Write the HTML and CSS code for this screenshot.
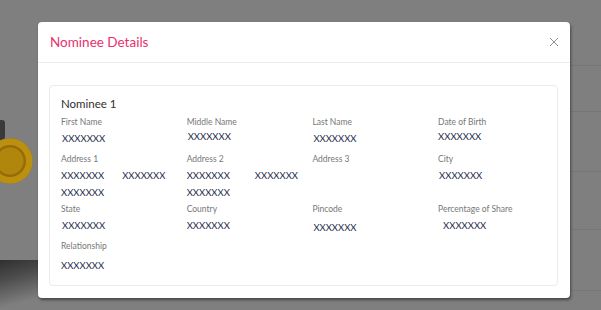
FILE: index.html
```html
<!DOCTYPE html>
<html lang="en">
<head>
    <meta charset="UTF-8">
    <meta name="viewport" content="width=device-width, initial-scale=1.0">
    <title>Nominee Details</title>
    <link rel="stylesheet" href="styles.css">
</head>
<body>
    <!-- page behind the dialog -->
    <div class="page">
        <div class="page-thumb">
            <span class="thumb-cap"></span>
            <span class="coin"></span>
            <span class="thumb-shade"></span>
        </div>
        <ul class="page-list">
            <li class="r1"></li>
            <li class="r2"></li>
            <li class="r3"></li>
            <li class="r4"></li>
            <li class="r5"></li>
        </ul>
    </div>

    <div class="overlay">
        <div class="modal">
            <div class="modal-header">
                <h4 class="modal-title">Nominee Details</h4>
                <button class="close" aria-label="Close">
                    <svg width="10" height="10" viewBox="0 0 10 10">
                        <path d="M1 1 L9 9 M9 1 L1 9" stroke="#858585" stroke-width="0.9" fill="none"/>
                    </svg>
                </button>
            </div>
            <div class="modal-body">
                <div class="card">
                    <div class="card-title">Nominee 1</div>
                    <div class="fields">
                        <div class="field">
                            <div class="label">First Name</div>
                            <div class="value">XXXXXXX</div>
                        </div>
                        <div class="field">
                            <div class="label">Middle Name</div>
                            <div class="value up">XXXXXXX</div>
                        </div>
                        <div class="field">
                            <div class="label">Last Name</div>
                            <div class="value">XXXXXXX</div>
                        </div>
                        <div class="field">
                            <div class="label">Date of Birth</div>
                            <div class="value left up">XXXXXXX</div>
                        </div>

                        <div class="field">
                            <div class="label">Address 1</div>
                            <div class="value multi">
                                <span>XXXXXXX</span><span>XXXXXXX</span><span>XXXXXXX</span>
                            </div>
                        </div>
                        <div class="field">
                            <div class="label">Address 2</div>
                            <div class="value multi wide">
                                <span>XXXXXXX</span><span>XXXXXXX</span><span>XXXXXXX</span>
                            </div>
                        </div>
                        <div class="field">
                            <div class="label">Address 3</div>
                            <div class="value"></div>
                        </div>
                        <div class="field">
                            <div class="label">City</div>
                            <div class="value">XXXXXXX</div>
                        </div>

                        <div class="field">
                            <div class="label">State</div>
                            <div class="value">XXXXXXX</div>
                        </div>
                        <div class="field">
                            <div class="label">Country</div>
                            <div class="value left">XXXXXXX</div>
                        </div>
                        <div class="field">
                            <div class="label">Pincode</div>
                            <div class="value down">XXXXXXX</div>
                        </div>
                        <div class="field">
                            <div class="label">Percentage of Share</div>
                            <div class="value right">XXXXXXX</div>
                        </div>

                        <div class="field">
                            <div class="label">Relationship</div>
                            <div class="value left down2">XXXXXXX</div>
                        </div>
                    </div>
                </div>
            </div>
        </div>
    </div>
</body>
</html>
```

FILE: styles.css
```css
* { box-sizing: border-box; }
html, body { margin: 0; padding: 0; }
body {
    width: 601px;
    height: 310px;
    overflow: hidden;
    background: #7f7f7f;
    font-family: Lato, "Open Sans", Arial, sans-serif;
    position: relative;
}

/* dimmed page behind */
.page { display: flex; height: 310px; }
.page-thumb { width: 40px; overflow: hidden; }
.thumb-cap {
    display: block;
    width: 5px; height: 20px;
    margin-top: 120px;
    background: #3a3a3a;
    border-radius: 0 3px 3px 0;
}
.coin {
    display: block;
    width: 46px; height: 46px;
    margin-left: -13px;
    margin-top: -2px;
    border-radius: 50%;
    background: radial-gradient(circle, #b0860c 0, #b0860c 13px, #976c08 14px, #976c08 15.5px, #bb900f 16.5px, #bb900f 22px, #8f7a40 23px);
}
.thumb-shade {
    display: block;
    height: 50px;
    margin-top: 76px;
    background: linear-gradient(165deg, #303030 0, #4d4d4d 35%, #7f7f7f 80%);
}
.page-list { flex: 1; list-style: none; margin: 0; padding: 0; }
.page-list li { border-bottom: 1px solid #767676; }
.page-list .r1 { height: 66px; }
.page-list .r2 { height: 46px; }
.page-list .r3 { height: 60px; }
.page-list .r4 { height: 58px; }
.page-list .r5 { height: 61px; }

/* dialog */
.overlay {
    position: absolute;
    top: 0; left: 0; right: 0; bottom: 0;
    padding: 22px 0 0 38px;
}
.modal {
    width: 532px;
    height: 276px;
    background: #fff;
    border-radius: 4px;
    box-shadow: 1px 2px 3px rgba(0, 0, 0, 0.45);
}
.modal-header {
    display: flex;
    align-items: center;
    justify-content: space-between;
    height: 41px;
    padding: 0 11px 0 12px;
    border-bottom: 1px solid #ececec;
}
.modal-title {
    margin: 0;
    font-size: 13.5px;
    font-weight: 400;
    color: #e8306c;
}
.close {
    border: 0;
    background: none;
    padding: 0;
    width: 10px; height: 10px;
    display: flex;
}

.modal-body { padding: 22px 12px 0 11px; }
.card {
    height: 201px;
    border: 1px solid #ebebeb;
    border-radius: 4px;
    padding: 10px 0 0 11px;
}
.card-title {
    font-size: 11.5px;
    line-height: 16px;
    color: #2f2f2f;
    margin-bottom: 4px;
}
.fields {
    display: grid;
    grid-template-columns: repeat(4, 125.7px);
    grid-template-rows: 31px 44px 31px 31px;
    row-gap: 6px;
}
.label {
    font-size: 8.5px;
    line-height: 12px;
    color: #777;
}
.value {
    font-size: 9.5px;
    line-height: 17px;
    padding-top: 2px;
    color: #232a48;
    padding-left: 1px;
}
.value.multi { padding-left: 0; }
.value.multi span { display: inline-block; }
.value.multi span:nth-child(2) { margin-left: 18px; }
.value.wide span:nth-child(2) { margin-left: 25px; }
.value.up { padding-top: 0; }
.value.down { padding-top: 4px; }
.value.down2 { padding-top: 5px; margin-left: -2px; }
.value.left { margin-left: -1px; }
.value.right { margin-left: 4px; }
```
